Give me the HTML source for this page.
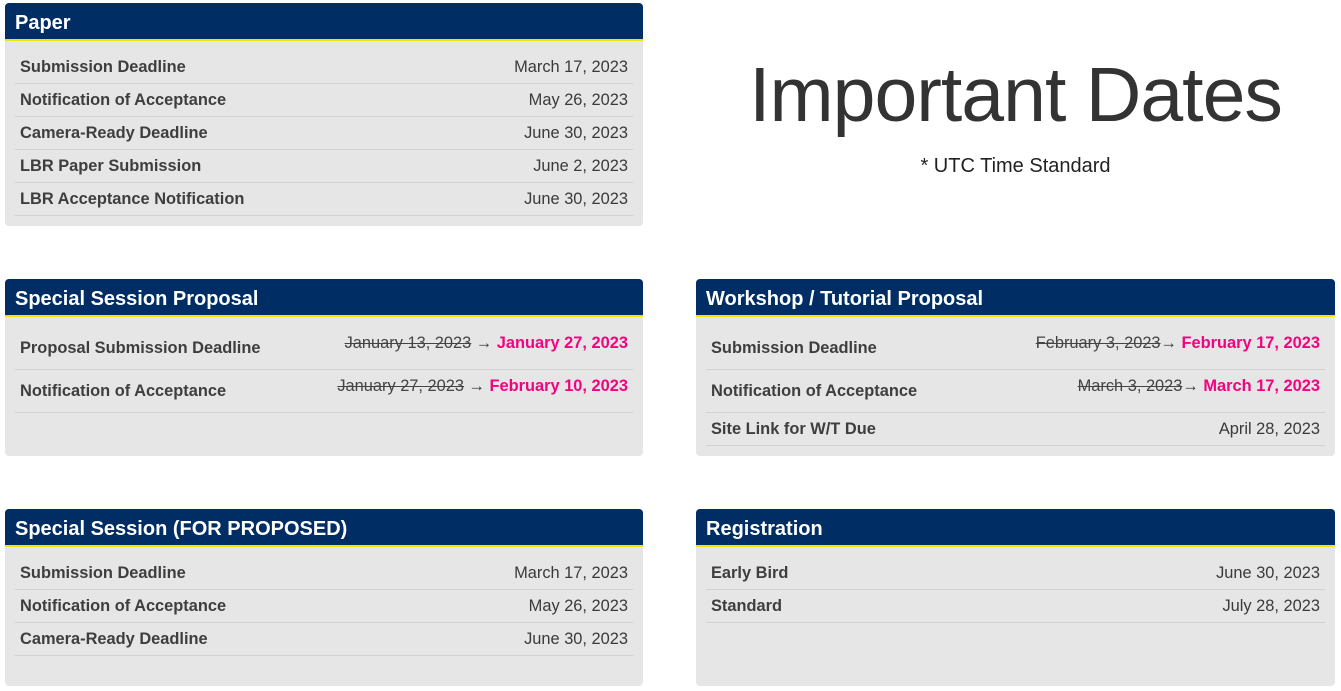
<!DOCTYPE html>
<html><head><meta charset="utf-8"><style>
*{box-sizing:border-box;margin:0;padding:0}
body{width:1341px;height:691px;background:#fff;font-family:"Liberation Sans",sans-serif;color:#3a3a3a;position:relative;overflow:hidden}
.card{position:absolute;background:#e6e6e6;border-radius:4px;overflow:hidden}
.hd{height:38px;background:#002e64;border-bottom:2px solid #f2e600;color:#fff;font-weight:bold;font-size:20px;line-height:40px;padding-left:10px}
.rows{padding:0 10px}
.r{display:flex;justify-content:space-between;border-bottom:1px solid #d2d2d2;height:33px;align-items:center;padding:0 5px;font-size:16.4px}
.r b{font-weight:bold;color:#3e3e3e}
.t{height:43px;align-items:flex-start}
.t b{margin-top:12px}
.t span{margin-top:7px}
.t span span{margin-top:0}
s{color:#444}
.p{color:#f0047f;font-weight:bold}
</style></head><body>
<div class="card" style="left:5px;top:3px;width:638px;height:223px">
<div class="hd">Paper</div>
<div class="rows" style="padding-top:10px">
<div class="r"><b>Submission Deadline</b><span>March 17, 2023</span></div>
<div class="r"><b>Notification of Acceptance</b><span>May 26, 2023</span></div>
<div class="r"><b>Camera-Ready Deadline</b><span>June 30, 2023</span></div>
<div class="r"><b>LBR Paper Submission</b><span>June 2, 2023</span></div>
<div class="r"><b>LBR Acceptance Notification</b><span>June 30, 2023</span></div>
</div></div>
<div style="position:absolute;left:696px;width:639px;top:51px;text-align:center;font-size:77px;color:#333;letter-spacing:-1px">Important Dates</div>
<div style="position:absolute;left:696px;width:639px;top:155px;text-align:center;font-size:20px;color:#222">* UTC Time Standard</div>

<div class="card" style="left:5px;top:279px;width:638px;height:177px">
<div class="hd">Special Session Proposal</div>
<div class="rows" style="padding-top:10px">
<div class="r t"><b>Proposal Submission Deadline</b><span><s>January 13, 2023</s> → <span class="p">January 27, 2023</span></span></div>
<div class="r t"><b>Notification of Acceptance</b><span><s>January 27, 2023</s> → <span class="p">February 10, 2023</span></span></div>
</div></div>

<div class="card" style="left:696px;top:279px;width:639px;height:177px">
<div class="hd">Workshop / Tutorial Proposal</div>
<div class="rows" style="padding-top:10px">
<div class="r t"><b>Submission Deadline</b><span><s>February 3, 2023</s>→ <span class="p">February 17, 2023</span></span></div>
<div class="r t"><b>Notification of Acceptance</b><span><s>March 3, 2023</s>→ <span class="p">March 17, 2023</span></span></div>
<div class="r"><b>Site Link for W/T Due</b><span>April 28, 2023</span></div>
</div></div>

<div class="card" style="left:5px;top:509px;width:638px;height:177px">
<div class="hd">Special Session (FOR PROPOSED)</div>
<div class="rows" style="padding-top:10px">
<div class="r"><b>Submission Deadline</b><span>March 17, 2023</span></div>
<div class="r"><b>Notification of Acceptance</b><span>May 26, 2023</span></div>
<div class="r"><b>Camera-Ready Deadline</b><span>June 30, 2023</span></div>
</div></div>

<div class="card" style="left:696px;top:509px;width:639px;height:177px">
<div class="hd">Registration</div>
<div class="rows" style="padding-top:10px">
<div class="r"><b>Early Bird</b><span>June 30, 2023</span></div>
<div class="r"><b>Standard</b><span>July 28, 2023</span></div>
</div></div>
</body></html>
